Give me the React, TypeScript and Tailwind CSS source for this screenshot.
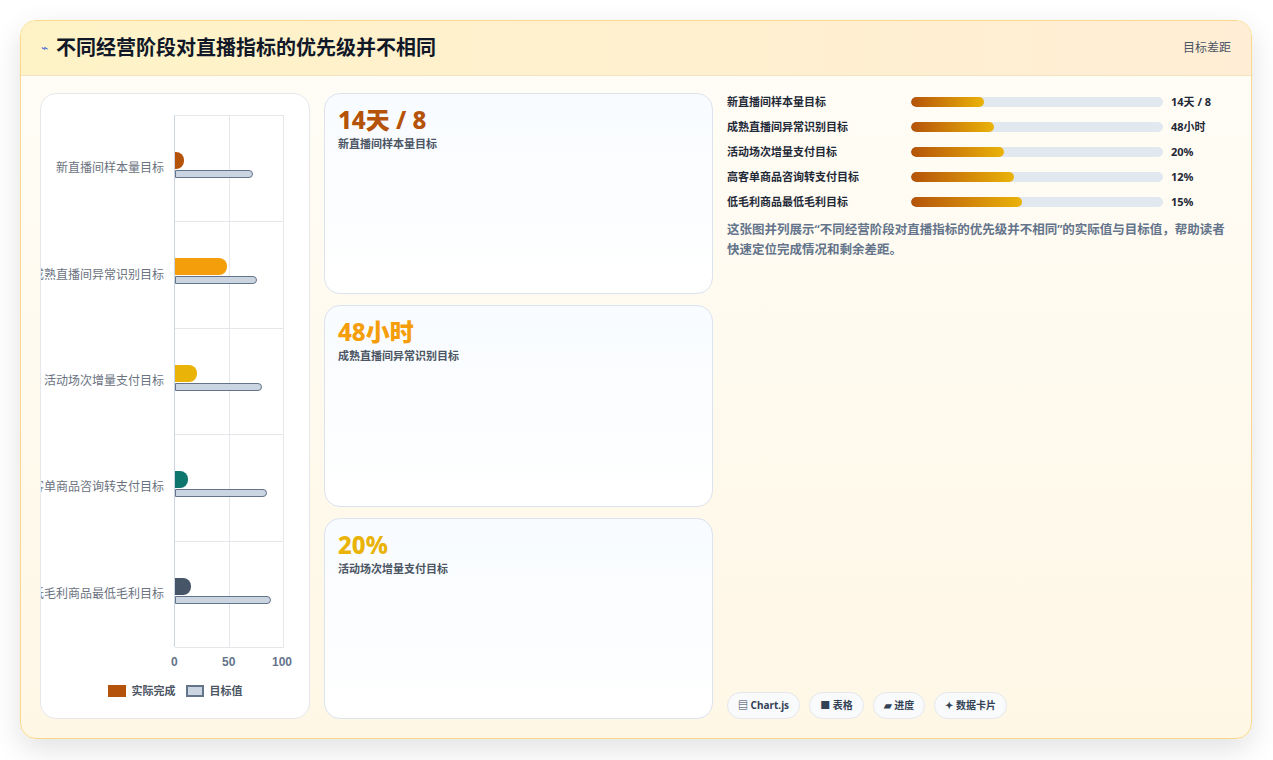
const rows = [
  { label: "新直播间样本量目标", a: 8, t: 72, c: "#b45309" },
  { label: "成熟直播间异常识别目标", a: 48, t: 75, c: "#f59e0b" },
  { label: "活动场次增量支付目标", a: 20, t: 80, c: "#eab308" },
  { label: "高客单商品咨询转支付目标", a: 12, t: 84, c: "#0f766e" },
  { label: "低毛利商品最低毛利目标", a: 15, t: 88, c: "#475569" },
];
const prog = [
  { label: "新直播间样本量目标", v: "14天 / 8", p: 29 },
  { label: "成熟直播间异常识别目标", v: "48小时", p: 33 },
  { label: "活动场次增量支付目标", v: "20%", p: 37 },
  { label: "高客单商品咨询转支付目标", v: "12%", p: 41 },
  { label: "低毛利商品最低毛利目标", v: "15%", p: 44 },
];
const cards = [
  { v: "14天 / 8", l: "新直播间样本量目标", c: "text-[#b45309]" },
  { v: "48小时", l: "成熟直播间异常识别目标", c: "text-[#f59e0b]" },
  { v: "20%", l: "活动场次增量支付目标", c: "text-[#eab308]" },
];
const S = 1.09;
export default function App() {
  return (
    <div className="w-[1273px] h-[760px] bg-white p-5" style={{ fontFamily: '"Noto Sans","Noto Sans CJK SC",sans-serif' }}>
      <div className="w-[1232px] h-[719px] rounded-2xl border border-[#fcd98a] shadow-[0_10px_30px_rgba(0,0,0,0.12)] overflow-hidden flex flex-col bg-gradient-to-b from-[#fffdf7] to-[#fff7e6]">
        <div className="h-[55px] shrink-0 flex items-center justify-between px-5 border-b border-[#f3e3c0] bg-gradient-to-r from-[#fef3c7] to-[#ffedd5]">
          <div className="flex items-center gap-2">
            <span className="text-[12px] text-[#4f6bd8]">⌁</span>
            <span className="text-[20px] font-bold text-[#111827]">不同经营阶段对直播指标的优先级并不相同</span>
          </div>
          <span className="text-[12px] text-[#4b5563]">目标差距</span>
        </div>
        <div className="flex-1 flex gap-[14px] pl-[19px] pr-5 pt-[17px] pb-[19px]">
          <div className="w-[270px] bg-white rounded-2xl border border-[#e5e7eb] flex flex-col pt-[21px]">
            <div className="flex">
              <div className="w-[133px] pl-[12px] overflow-hidden">
                {rows.map((r) => (
                  <div key={r.label} className="h-[106.4px] flex items-center justify-end pr-[10px] whitespace-nowrap text-[12px] text-[#6b7280]" style={{ fontFamily: '"Liberation Sans","Noto Sans CJK SC",sans-serif' }}>{r.label}</div>
                ))}
              </div>
              <div className="relative w-[110px] h-[532px] border-l border-[#cbd5e1] border-t border-t-[#e5e7eb]">
                <div className="absolute left-[54px] top-0 bottom-0 border-l border-[#e5e7eb]" />
                <div className="absolute left-[108px] top-0 bottom-0 border-l border-[#e5e7eb]" />
                {rows.map((r, i) => (
                  <div key={i} className="absolute left-0 right-0 h-[106.4px] border-b border-[#e5e7eb]" style={{ top: i * 106.4 }}>
                    <div className="absolute left-0 top-[36px] h-[17px] rounded-r-[8px]" style={{ width: r.a * S, background: r.c }} />
                    <div className="absolute left-0 top-[54px] h-[8px] rounded-r-[4px] bg-[#cbd5e1] border-[1.5px] border-[#64748b]" style={{ width: r.t * S }} />
                  </div>
                ))}
              </div>
            </div>
            <div className="relative h-[20px] ml-[133px] text-[12px] font-bold text-[#64748b]" style={{ fontFamily: '"Liberation Sans",sans-serif' }}>
              <span className="absolute left-[-3px] top-[6px]">0</span>
              <span className="absolute left-[48px] top-[6px]">50</span>
              <span className="absolute left-[98px] top-[6px]">100</span>
            </div>
            <div className="flex justify-center items-center gap-[6px] mt-[16px] text-[11px] text-[#4b5563] font-semibold">
              <span className="w-[18px] h-[12px] bg-[#b45309]" /> 实际完成
              <span className="w-[18px] h-[12px] bg-[#cbd5e1] border-2 border-[#64748b] ml-1" /> 目标值
            </div>
          </div>
          <div className="w-[389px] flex flex-col gap-[11px]">
            {cards.map((c) => (
              <div key={c.l} className="flex-1 rounded-2xl border border-[#dbe3ee] bg-gradient-to-b from-[#f8fbff] to-white px-[13px] pt-[10px]">
                <div className={`text-[24px] font-extrabold leading-[32px] ${c.c}`}>{c.v}</div>
                <div className="text-[11px] text-[#4b5563] font-semibold">{c.l}</div>
              </div>
            ))}
          </div>
          <div className="flex-1 flex flex-col">
            <div className="flex flex-col gap-[7px]">
              {prog.map((p) => (
                <div key={p.label} className="flex items-center h-[18px] text-[11px] font-bold text-[#1f2937]">
                  <span className="w-[184px]">{p.label}</span>
                  <div className="w-[252px] h-[10px] rounded-full bg-[#e2e8f0] overflow-hidden">
                    <div className="h-full rounded-full bg-gradient-to-r from-[#b45309] to-[#eab308]" style={{ width: p.p + "%" }} />
                  </div>
                  <span className="ml-2">{p.v}</span>
                </div>
              ))}
            </div>
            <p className="mt-[9px] text-[12.5px] leading-[20px] font-semibold text-[#64748b]">这张图并列展示“不同经营阶段对直播指标的优先级并不相同”的实际值与目标值，帮助读者快速定位完成情况和剩余差距。</p>
            <div className="mt-auto flex gap-[9px]">
              {["▤ Chart.js", "■ 表格", "▰ 进度", "✦ 数据卡片"].map((t) => (
                <span key={t} className="h-[27px] px-[10px] flex items-center rounded-full border border-[#e5e7eb] bg-[#f8fafc] text-[10px] font-bold text-[#334155]">{t}</span>
              ))}
            </div>
          </div>
        </div>
      </div>
    </div>
  );
}
